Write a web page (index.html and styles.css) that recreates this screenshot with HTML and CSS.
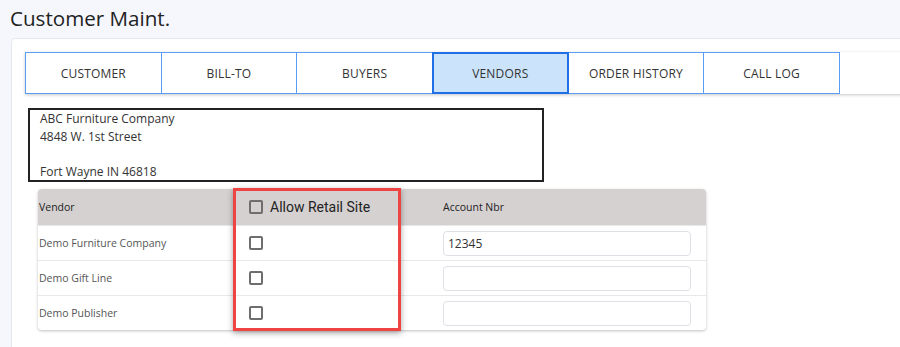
FILE: index.html
```html
<!DOCTYPE html>
<html lang="en">
<head>
    <meta charset="UTF-8">
    <title>Customer Maint.</title>
    <link rel="stylesheet" href="styles.css">
</head>
<body>
    <h1 class="page-title">Customer Maint.</h1>

    <div class="card">
        <div class="tab-strip">
            <div class="tab">Customer</div>
            <div class="tab">Bill-To</div>
            <div class="tab">Buyers</div>
            <div class="tab active">Vendors</div>
            <div class="tab">Order History</div>
            <div class="tab">Call Log</div>
        </div>

        <div class="address-box">
            <div>ABC Furniture Company</div>
            <div>4848 W. 1st Street</div>
            <div>&nbsp;</div>
            <div>Fort Wayne IN 46818</div>
        </div>

        <div class="vendor-table">
            <div class="row head">
                <div class="col-vendor">Vendor</div>
                <div class="col-allow"><span class="check"></span><span class="allow-label">Allow Retail Site</span></div>
                <div class="col-acct">Account Nbr</div>
            </div>
            <div class="row">
                <div class="col-vendor">Demo Furniture Company</div>
                <div class="col-allow"><span class="check"></span></div>
                <div class="col-acct"><input type="text" value="12345"></div>
            </div>
            <div class="row">
                <div class="col-vendor">Demo Gift Line</div>
                <div class="col-allow"><span class="check"></span></div>
                <div class="col-acct"><input type="text" value=""></div>
            </div>
            <div class="row">
                <div class="col-vendor">Demo Publisher</div>
                <div class="col-allow"><span class="check"></span></div>
                <div class="col-acct"><input type="text" value=""></div>
            </div>

            <!-- highlight around the retail site column -->
            <div class="highlight"></div>
        </div>
    </div>
</body>
</html>
```

FILE: styles.css
```css
body {
    font-family: 'Open Sans', sans-serif;
    margin: 0;
    background-color: #f6f7fc;
    color: #333;
    overflow: hidden;
}
.page-title {
    font-size: 20.6px;
    font-weight: 400;
    line-height: 27px;
    color: #222;
    margin: 0;
    padding: 5px 0 0 10px;
}
.card {
    margin: 6px -20px 0 11px;
    background-color: #fff;
    border: 1px solid #e6e7ee;
    border-radius: 4px;
    padding: 13px 0 0 13px;
    height: 300px;
}
.tab-strip {
    display: flex;
    height: 42px;
    box-shadow: 0 1px 3px rgba(0,0,0,0.22);
}
.tab {
    width: 136.67px;
    flex-shrink: 0;
    box-sizing: border-box;
    border: 1px solid #5b9cf5;
    margin-right: -1px;
    display: flex;
    align-items: center;
    justify-content: center;
    font-size: 12px;
    text-transform: uppercase;
    color: #333;
    letter-spacing: 0.2px;
    background-color: #fff;
}
.tab.active {
    background-color: #cce4fb;
    border: 2px solid #1f6fe6;
    position: relative;
}
.address-box {
    margin: 14px 0 0 3px;
    width: 516px;
    height: 74px;
    box-sizing: border-box;
    border: 2px solid #222;
    padding: 0 10px;
    font-size: 12px;
    line-height: 17.5px;
    color: #333;
}
.vendor-table {
    position: relative;
    margin: 7px 0 0 13px;
    width: 668px;
    border-radius: 4px;
    box-shadow: 0 1px 3px rgba(0,0,0,0.25);
}
.row {
    display: flex;
    align-items: center;
    height: 35px;
    box-sizing: border-box;
    border-top: 1px solid #e8e8e8;
    font-size: 10.5px;
    color: #555;
}
.row.head {
    height: 36px;
    border-top: none;
    background-color: #d5d1d1;
    color: #222;
    border-radius: 4px 4px 0 0;
}
.col-vendor {
    width: 195px;
    padding-left: 1px;
    box-sizing: border-box;
}
.col-allow {
    width: 197px;
    padding-left: 16px;
    box-sizing: border-box;
    display: flex;
    align-items: center;
}
.col-acct {
    flex: 1;
    padding: 0 15px 0 13px;
}
.check {
    width: 14px;
    height: 14px;
    box-sizing: border-box;
    border: 2px solid #6e6e6e;
    border-radius: 2px;
    background-color: #fff;
}
.head .check {
    background-color: transparent;
}
.allow-label {
    font-family: Roboto, sans-serif;
    font-size: 14px;
    color: #222;
    margin-left: 7px;
}
input {
    width: 100%;
    height: 25px;
    box-sizing: border-box;
    border: 1px solid #dde1e6;
    border-radius: 4px;
    padding: 0 4px;
    font-family: inherit;
    font-size: 12px;
    color: #333;
}
.highlight {
    position: absolute;
    left: 195px;
    top: -1px;
    width: 168px;
    height: 143px;
    box-sizing: border-box;
    border: 3px solid #ef4444;
    box-shadow: 0 2px 6px rgba(0,0,0,0.35);
}
```
